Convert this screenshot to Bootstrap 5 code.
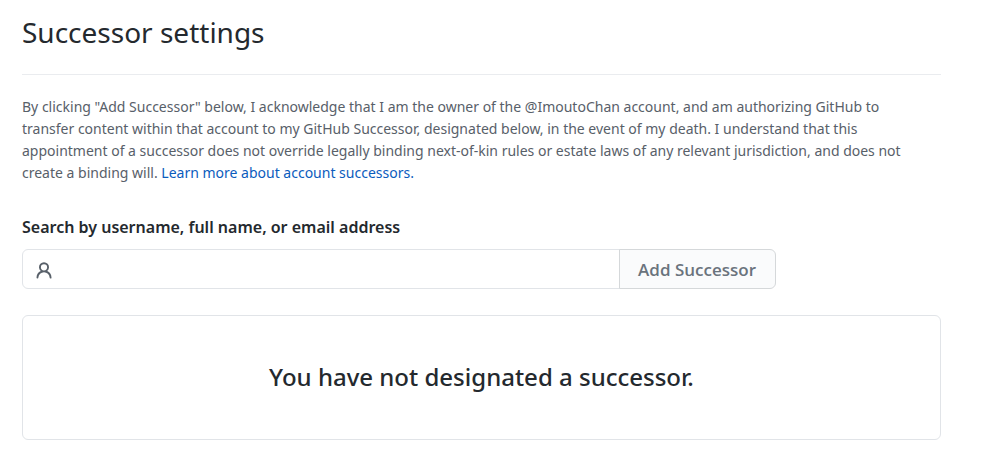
<!DOCTYPE html>
<html lang="en">
<head>
<meta charset="utf-8">
<meta name="viewport" content="width=device-width, initial-scale=1">
<title>Successor settings</title>
<link href="https://cdn.jsdelivr.net/npm/bootstrap@5.3.0/dist/css/bootstrap.min.css" rel="stylesheet">
<style>
  body { font-family: "Noto Sans", "Open Sans", sans-serif; color: #24292e; }
  .settings { padding: 15px 64px 24px 22px; }
  .settings-title { font-size: 28px; line-height: 34px; font-weight: 400; padding-bottom: 25px; margin-bottom: 21px; border-bottom: 1px solid #eaecef; }
  .notice { font-size: 14px; line-height: 22px; color: #586069; margin-bottom: 32px; padding-right: 20px; }
  .notice a { color: #0b5cbd; text-decoration: none; }
  .search-label { font-size: 16px; line-height: 22px; font-weight: 600; margin-bottom: 11px; }
  .search-group { width: 82%; height: 40px; }
  .search-group .input-group-text { background: #fff; border-color: #e1e4e8; padding: 4px 8px 0 11px; border-radius: 6px; color: #586069; }
  .search-group .form-control { border-color: #e1e4e8; border-left: 0; }
  .search-group .btn { width: 157px; padding: 2px 0 0; font-family: "Open Sans", sans-serif; font-size: 17px; line-height: 24px; font-weight: 600; color: #6a737d; background: #fafbfc; border-color: #d5d8da; border-radius: 6px; }
  .blankslate { margin-top: 26px; padding: 45px 16px 47px; border: 1px solid #e1e4e8; border-radius: 6px; }
  .blankslate h2 { font-size: 24px; line-height: 31px; font-weight: 500; }
</style>
</head>
<body>
<main class="settings">
  <h1 class="settings-title">Successor settings</h1>
  <p class="notice">By clicking "Add Successor" below, I acknowledge that I am the owner of the @ImoutoChan account, and am authorizing GitHub to transfer content within that account to my GitHub Successor, designated below, in the event of my death. I understand that this appointment of a successor does not override legally binding next-of-kin rules or estate laws of any relevant jurisdiction, and does not create a binding will. <a href="#">Learn more about account successors.</a></p>
  <form>
    <label class="search-label d-block" for="successor">Search by username, full name, or email address</label>
    <div class="input-group search-group">
      <span class="input-group-text"><svg width="20" height="20" viewBox="0 0 16 16" fill="currentColor" aria-hidden="true"><path fill-rule="evenodd" d="M10.5 5a2.500 2.500 0 11-5 0 2.500 2.500 0 015 0zm.061 3.073a4 4 0 10-5.123 0 6.004 6.004 0 00-3.431 5.142.75.75 0 001.498.07 4.500 4.500 0 018.990 0 .75.75 0 101.498-.070 6.005 6.005 0 00-3.432-5.142z"/></svg></span>
      <input class="form-control" id="successor" type="text">
      <button class="btn" type="button">Add Successor</button>
    </div>
  </form>
  <section class="blankslate text-center"><h2 class="mb-0">You have not designated a successor.</h2></section>
</main>
<script src="https://cdn.jsdelivr.net/npm/bootstrap@5.3.0/dist/js/bootstrap.bundle.min.js"></script>
</body>
</html>
